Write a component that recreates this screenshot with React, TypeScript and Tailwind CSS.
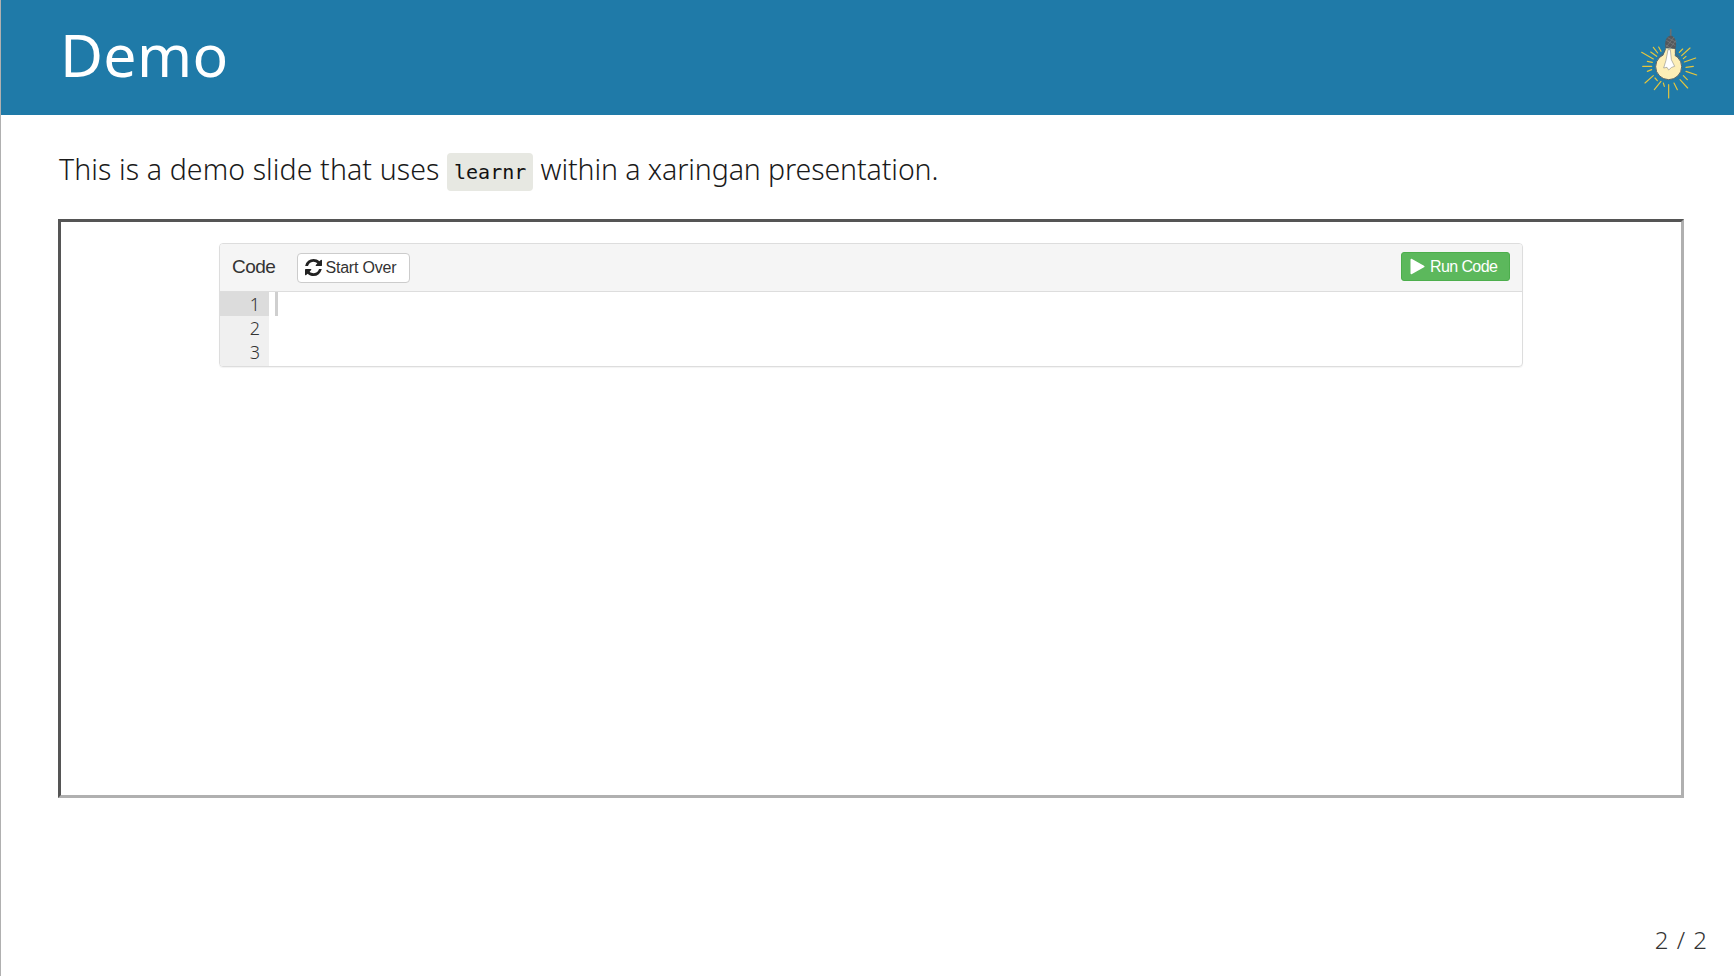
export default function App() {
  const rays = [
    "M125 158 L160 178","M152 157 L170 170","M160 143 L173 160","M176 142 L183 155","M238 158 L248 148","M245 168 L270 145","M250 177 L258 170","M253 187 L287 175",
    "M258 203 L280 200","M258 215 L290 226","M250 228 L262 240","M240 240 L263 265","M222 250 L232 270","M206 255 L206 295","M190 250 L193 260","M183 245 L163 270",
    "M165 235 L172 243","M160 228 L135 250","M142 215 L155 210","M128 200 L155 200","M142 185 L157 188",
  ];
  return (
    <div className="w-[1734px] h-[976px] flex flex-col bg-white border-l border-[#b0b0b0] overflow-hidden font-['Noto_Sans',sans-serif] font-light text-[#1a1a1a]">
      <header className="h-[115px] shrink-0 bg-[#1f7aa8] flex items-center justify-between pl-[59px] pr-[34px]">
        <h1 className="text-[59px] leading-none font-normal text-white tracking-[0.3px] pb-[6px]">Demo</h1>
        <svg width="60" height="75" viewBox="120 85 180 225" className="self-start mt-[28px]">
          {rays.map((d) => (
            <path key={d} d={d} stroke="#e6c63c" strokeWidth="3.5" strokeLinecap="round" fill="none" />
          ))}
          <path d="M212 88 V114" stroke="#6a6e72" strokeWidth="5" />
          <path d="M197 146 C192 130 198 108 212 108 C226 108 232 130 226 148 Z" fill="#54585c" />
          <path d="M199 122 L226 138 M203 114 L229 128 M197 136 L216 148 M222 112 L199 142 M228 122 L208 148" stroke="#7d8082" strokeWidth="2" />
          <circle cx="206" cy="201" r="39" fill="#fdeeb6" stroke="#5a6468" strokeWidth="3" />
          <path d="M197 146 L226 148 L224 170 L190 170 Z" fill="#fdeeb6" />
          <path d="M197 146 L193 158 L176 174 M226 148 L226 160 L238 174" stroke="#5a6468" strokeWidth="3" fill="none" />
          <path d="M204 150 L211 150 L214 180 L224 200 L215 203 L206 211 L201 203 L191 205 L198 182 Z" fill="#ffffff" stroke="#777777" strokeWidth="1.500" />
        </svg>
      </header>

      <main className="flex-1 flex flex-col pl-[57px] pr-[50px]">
        <p className="mt-[38px] ml-[1px] h-[38px] text-[28.5px] leading-[32px] whitespace-nowrap">
          <span className="tracking-[0.1px]">This is a demo slide that uses </span>
          <code className="inline-block align-top h-[38px] px-[7px] rounded-[4px] bg-[#e7e8e2] font-['DejaVu_Sans_Mono',monospace] font-normal text-[20px] leading-[38px] text-[#111]">learnr</code>
          <span className="tracking-[-0.1px]"> within a xaringan presentation.</span>
        </p>

        <div className="mt-[28px] w-[1626px] h-[579px] border-[3px] border-t-[#555555] border-l-[#555555] border-r-[#b0b0b0] border-b-[#b0b0b0] pt-[21px] pl-[158px]">
          <div className="w-[1304px] h-[124px] rounded-[4px] border border-[#dddddd] shadow-[0_1px_1px_rgba(0,0,0,0.05)] overflow-hidden font-['Liberation_Sans',sans-serif] font-normal">
            <div className="h-[48px] bg-[#f5f5f5] border-b border-[#dddddd] flex items-center pl-[12px] pr-[12px] text-[#333]">
              <span className="text-[19px] tracking-[-0.5px]">Code</span>
              <button className="ml-[22px] w-[113px] h-[30px] bg-white border border-[#cccccc] rounded-[4px] flex items-center pl-[7px] text-[16px] tracking-[-0.2px]">
                <svg width="17" height="17" viewBox="0 0 1536 1536" className="mr-[3px]">
                  <path fill="#222" d="M1511 928q0 5-1 7-64 268-268 434.5T764 1536q-146 0-282.5-55T238 1324l-129 129q-19 19-45 19t-45-19-19-45V960q0-26 19-45t45-19h448q26 0 45 19t19 45-19 45l-137 137q71 66 161 102t187 36q134 0 250-65t186-179q11-17 53-117 8-23 30-23h192q13 0 22.500 9.500t9.500 22.500zm25-800v448q0 26-19 45t-45 19h-448q-26 0-45-19t-19-45 19-45l138-138Q969 256 768 256q-134 0-250 65T332 500q-11 17-53 117-8 23-30 23H50q-13 0-22.500-9.500T18 608v-7q65-268 270-434.500T768 0q146 0 284 55.500T1297 212l130-129q19-19 45-19t45 19 19 45z" />
                </svg>
                Start Over
              </button>
              <button className="ml-auto w-[109px] h-[29px] mt-[-2px] bg-[#5cb85c] border border-[#4cae4c] rounded-[3px] flex items-center pl-[8px] text-[16px] tracking-[-0.6px] text-white">
                <svg width="15" height="17" viewBox="0 0 15 16" className="mr-[5px]">
                  <path fill="#fff" d="M0.500 1.200 C0.500 0.300 1.200 -0.100 2 0.400 L14 7.200 C14.800 7.700 14.800 8.300 14 8.800 L2 15.600 C1.200 16.100 0.500 15.700 0.500 14.800 Z" />
                </svg>
                Run Code
              </button>
            </div>
            <div className="flex h-[74px]">
              <div className="w-[49px] bg-[#f0f0f0] font-['Noto_Sans',sans-serif] font-light text-[18px] leading-[24px] text-[#333] text-right">
                <div className="h-[24px] bg-[#dcdcdc] pr-[9px]">1</div>
                <div className="pr-[9px]">2</div>
                <div className="pr-[9px]">3</div>
              </div>
              <div className="ml-[6px] w-[3px] h-[24px] bg-[#cfcfcf]" />
            </div>
          </div>
        </div>

        <div className="mt-auto mb-[24px] self-end mr-[-24px] text-[24px] leading-none text-[#333] tracking-[1px]">2 / 2</div>
      </main>
    </div>
  );
}
